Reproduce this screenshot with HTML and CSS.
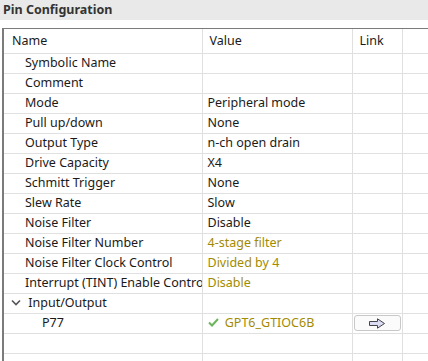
FILE: index.html
```html
<!DOCTYPE html>
<html lang="en">
<head>
    <meta charset="UTF-8">
    <title>Pin Configuration</title>
    <link rel="stylesheet" href="styles.css">
</head>
<body>
    <div class="panel-title">Pin Configuration</div>

    <!-- Tabela de propriedades do pino -->
    <div class="grid-wrap">
        <table class="props">
            <colgroup>
                <col class="c-name">
                <col class="c-value">
                <col class="c-link">
                <col>
            </colgroup>
            <tr class="head">
                <td class="first">Name</td>
                <td>Value</td>
                <td>Link</td>
                <td></td>
            </tr>
            <tr><td class="lvl1">Symbolic Name</td><td></td><td></td><td></td></tr>
            <tr><td class="lvl1">Comment</td><td></td><td></td><td></td></tr>
            <tr><td class="lvl1">Mode</td><td>Peripheral mode</td><td></td><td></td></tr>
            <tr><td class="lvl1">Pull up/down</td><td>None</td><td></td><td></td></tr>
            <tr><td class="lvl1">Output Type</td><td>n-ch open drain</td><td></td><td></td></tr>
            <tr><td class="lvl1">Drive Capacity</td><td>X4</td><td></td><td></td></tr>
            <tr><td class="lvl1">Schmitt Trigger</td><td>None</td><td></td><td></td></tr>
            <tr><td class="lvl1">Slew Rate</td><td>Slow</td><td></td><td></td></tr>
            <tr><td class="lvl1">Noise Filter</td><td>Disable</td><td></td><td></td></tr>
            <tr><td class="lvl1">Noise Filter Number</td><td class="dim">4-stage filter</td><td></td><td></td></tr>
            <tr><td class="lvl1">Noise Filter Clock Control</td><td class="dim">Divided by 4</td><td></td><td></td></tr>
            <tr><td class="lvl1">Interrupt (TINT) Enable Control</td><td class="dim">Disable</td><td></td><td></td></tr>
            <tr>
                <td class="group">
                    <svg class="chev" width="10" height="7" viewBox="0 0 10 7"><path d="M1 1.5 L5 5.5 L9 1.5" fill="none" stroke="#555" stroke-width="1.6"/></svg>
                    Input/Output
                </td>
                <td></td><td></td><td></td>
            </tr>
            <tr>
                <td class="lvl2">P77</td>
                <td class="dim">
                    <svg class="check" width="11" height="9" viewBox="0 0 11 9"><path d="M1 4.5 L4 7.5 L10 1" fill="none" stroke="#6cb55a" stroke-width="2"/></svg>
                    GPT6_GTIOC6B
                </td>
                <td class="link-cell">
                    <button class="go">
                        <svg width="18" height="11" viewBox="0 0 18 11"><path d="M1.5 3.5 H9.5 V0.8 L16.5 5.5 L9.5 10.2 V7.5 H1.5 Z" fill="#dcdcf4" stroke="#444" stroke-width="1"/></svg>
                    </button>
                </td>
                <td></td>
            </tr>
            <tr><td></td><td></td><td></td><td></td></tr>
            <tr><td></td><td></td><td></td><td></td></tr>
        </table>
    </div>
</body>
</html>
```

FILE: styles.css
```css
* {
    margin: 0;
    padding: 0;
    box-sizing: border-box;
}

body {
    font-family: "Noto Sans", "Liberation Sans", sans-serif;
    font-size: 12.5px;
    color: #1a1a1a;
    background-color: #fff;
    width: 428px;
    height: 361px;
    overflow: hidden;
}

.panel-title {
    height: 20px;
    background-color: #e9e9e9;
    padding-left: 3px;
    font-weight: bold;
    font-size: 12.5px;
    line-height: 19px;
    color: #333;
}

.grid-wrap {
    margin-top: 8px;
    margin-left: 2px;
    border-top: 1px solid #7b7b7b;
    border-left: 2px solid #7b7b7b;
}

.props {
    border-collapse: collapse;
    table-layout: fixed;
    width: 426px;
}

.props col.c-name { width: 198px; }
.props col.c-value { width: 150px; }
.props col.c-link { width: 50px; }

.props td {
    height: 20px;
    border-right: 1px solid #e0e0e0;
    border-bottom: 1px solid #e0e0e0;
    white-space: nowrap;
    overflow: hidden;
    padding-left: 5px;
    line-height: 18px;
    vertical-align: middle;
}

.props tr.head td {
    height: 24px;
    padding-left: 7px;
}

.props tr.head td.first {
    padding-left: 8px;
}

.props td.lvl1 {
    padding-left: 21px;
}

.props td.lvl2 {
    padding-left: 38px;
}

.props td.group {
    padding-left: 7px;
}

.chev {
    margin-right: 4px;
    vertical-align: 1px;
}

.check {
    margin-right: 3px;
    vertical-align: 0;
}

.props td.dim {
    color: #a38b00;
}

.props td.link-cell {
    padding-left: 1px;
}

.go {
    display: block;
    width: 47px;
    height: 16px;
    border: 1px solid #c8c8c8;
    border-radius: 3px;
    background-color: #fbfbfb;
    line-height: 0;
}
```
